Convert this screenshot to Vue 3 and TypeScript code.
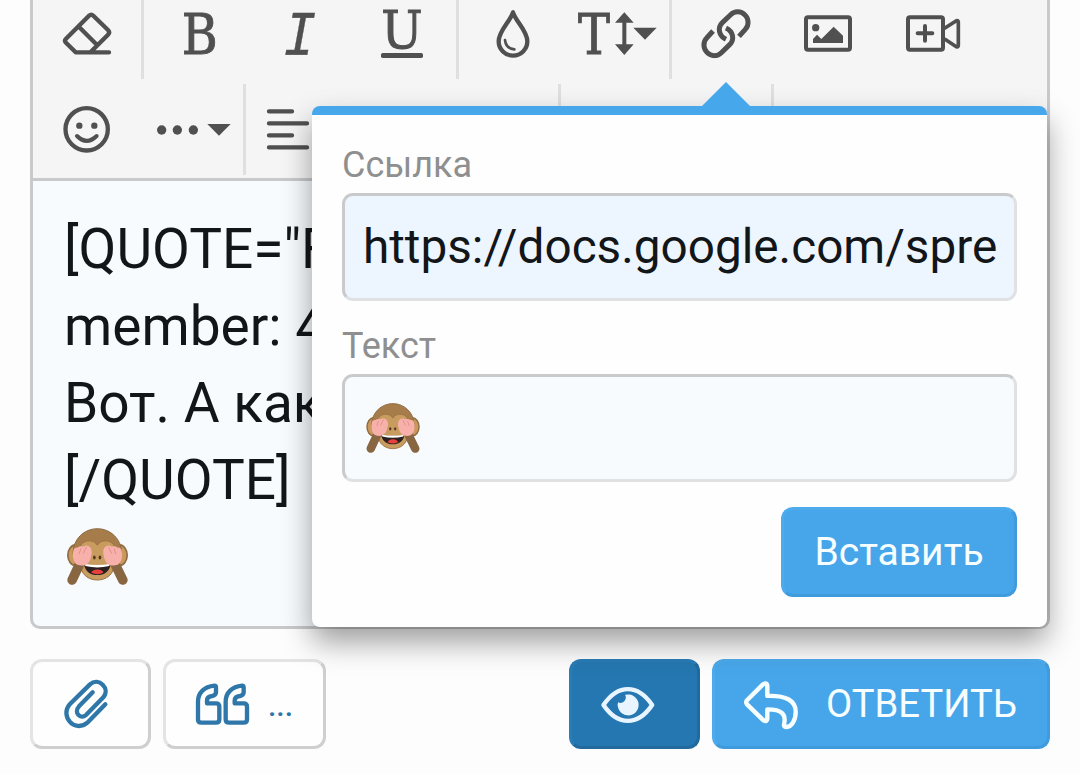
<script setup lang="ts">
import { ref } from 'vue'

const message = ref<string[]>([
  '[QUOTE="F',
  'member: 4',
  'Вот. А как',
  '[/QUOTE]'
])

const linkUrl = ref('https://docs.google.com/spre')
</script>

<template>
  <div class="page">
    <svg class="defs" width="0" height="0">
      <symbol id="monkey" viewBox="141 294 183 172">
        <ellipse cx="166" cy="376" rx="23" ry="31" fill="#c99a5b" stroke="#8f6a42" stroke-width="5" />
        <ellipse cx="299" cy="376" rx="23" ry="31" fill="#c99a5b" stroke="#8f6a42" stroke-width="5" />
        <ellipse cx="232" cy="368" rx="73" ry="72" fill="#a67c4b" stroke="#8b6740" stroke-width="3" />
        <path d="M232 346C222 326 184 328 179 354C176 378 186 388 181 404C182 434 205 451 232 451S282 434 283 404C278 388 288 378 285 354C280 328 242 326 232 346Z" fill="#c89b5e" stroke="#9a7244" stroke-width="3" />
        <ellipse cx="223" cy="383" rx="4" ry="6" fill="#54391f" />
        <ellipse cx="240" cy="383" rx="4" ry="6" fill="#54391f" />
        <path d="M192 404Q232 410 272 404C268 426 253 436 232 436S196 426 192 404Z" fill="#2c2020" />
        <path d="M194 403Q232 409 270 403L268 409Q232 418 196 409Z" fill="#fff" />
        <path d="M214 429Q218 419 232 419T250 429Q232 438 214 429Z" fill="#e8413d" />
        <path d="M177 406L156 451M287 406L309 451" stroke="#886642" stroke-width="29" stroke-linecap="round" />
        <path d="M160 361C162 352 170 354 174 352C180 346 188 352 194 348C202 344 208 350 212 354C219 366 213 378 211 388C205 406 188 411 172 405C158 398 156 376 160 361Z" fill="#f8b1aa" />
        <path d="M305 361C303 352 295 354 291 352C285 346 277 352 271 348C263 344 257 350 253 354C246 366 252 378 254 388C260 406 277 411 293 405C307 398 309 376 305 361Z" fill="#f8b1aa" />
        <path d="M177 372L182 357M190 370L199 352M288 372L283 357M275 370L266 352" stroke="#d98983" stroke-width="2.500" stroke-linecap="round" />
      </symbol>
    </svg>

    <div class="editor">
      <div class="toolbar">
        <div class="toolbar-row">
          <div class="group">
            <svg class="tool" viewBox="48 -36 306 273">
              <path class="line" d="M267 157H167L138 128Q132 122 138 116L207 47Q214 41 220 47L264 90Q271 97 264 104L212 156M178 82L229 133" stroke-width="13" />
            </svg>
          </div>
          <div class="group">
            <svg class="tool" viewBox="381 -36 306 273">
              <text x="485" y="163" font-size="170" textLength="108" lengthAdjust="spacingAndGlyphs">B</text>
            </svg>
            <svg class="tool" viewBox="687 -36 306 273">
              <text class="italic" x="792" y="164" font-size="173" textLength="97" lengthAdjust="spacingAndGlyphs">I</text>
            </svg>
            <svg class="tool" viewBox="33 -36 306 273">
              <text x="124" y="145" font-size="156" textLength="124" lengthAdjust="spacingAndGlyphs">U</text>
              <rect x="123" y="159" width="126" height="15" rx="5" />
            </svg>
          </div>
          <div class="group">
            <svg class="tool" viewBox="366 -36 306 273">
              <path class="line" d="M519 37C510 66 476 92 476 124a43 43 0 0 0 86 0C562 92 528 66 519 37Z" stroke-width="13" />
              <path class="line" d="M495 120Q498 146 523 148" stroke-width="8" />
            </svg>
            <svg class="tool" viewBox="672 -36 306 273">
              <text x="714" y="163" font-size="170" textLength="96" lengthAdjust="spacingAndGlyphs">T</text>
              <path d="M853 37L881 68H859V133H881L853 165L825 133H847V68H825Z" />
              <path d="M880 83H950L915 119Z" />
            </svg>
          </div>
          <div class="group">
            <svg class="tool" viewBox="15 -36 306 273">
              <path class="line butt" d="M207 109L226 88C238 76 236 55 225 45C212 31 193 33 182 44L157 68C141 84 147 108 168 118M129 93L110 114C98 126 100 147 111 157C124 171 143 169 154 158L179 134C195 118 189 94 168 84" stroke-width="15" />
            </svg>
            <svg class="tool" viewBox="321 -36 306 273">
              <rect class="line" x="408" y="52" width="132" height="97" rx="6" stroke-width="12" />
              <circle cx="437" cy="83" r="11" />
              <path d="M429 129V117L441 104L454 117L491 80L519 107V129Z" />
            </svg>
            <svg class="tool" viewBox="627 -36 306 273">
              <rect class="line" x="714" y="52" width="105" height="97" rx="6" stroke-width="12" />
              <path class="line" d="M825 84L859 62Q865 60 865 66V136Q865 142 859 140L825 118" stroke-width="11" />
              <path class="line" d="M743 100H787M765 78V122" stroke-width="12" />
            </svg>
          </div>
        </div>
        <div class="toolbar-row">
          <div class="group">
            <svg class="tool" viewBox="48 252 306 273">
              <circle class="line" cx="200" cy="388" r="63.500" stroke-width="13" />
              <circle cx="178" cy="377" r="9.500" />
              <circle cx="223" cy="377" r="9.500" />
              <path class="line" d="M171 408Q200 437 230 408" stroke-width="12" />
            </svg>
            <svg class="tool" viewBox="354 252 306 273">
              <circle cx="425" cy="390" r="14" />
              <circle cx="472" cy="390" r="14" />
              <circle cx="520" cy="390" r="14" />
              <path d="M562 372H632L597 407Z" />
            </svg>
          </div>
          <div class="group wide">
            <svg class="tool" viewBox="687 252 306 273">
              <path class="line" d="M747 334H816M747 370H861M747 406H816M747 442H861" stroke-width="13" />
            </svg>
          </div>
          <div class="group medium"></div>
        </div>
      </div>

      <div class="message">
        <div v-for="(line, i) in message" :key="i" class="message-line">{{ line }}</div>
        <div class="message-line">
          <svg class="monkey"><use href="#monkey" /></svg>
        </div>
      </div>

      <div class="popover">
        <div class="popover-arrow"></div>
        <label class="field-label">Ссылка</label>
        <div class="field filled">{{ linkUrl }}</div>
        <label class="field-label">Текст</label>
        <div class="field">
          <svg class="monkey small"><use href="#monkey" /></svg>
        </div>
        <button class="btn primary insert">Вставить</button>
      </div>
    </div>

    <div class="actions">
      <button class="btn plain attach">
        <svg width="121" height="90" viewBox="30 57 363 270">
          <path class="stroke-icon" d="M218 157L177 199C160 218 182 240 198 225L250 172C272 146 236 110 210 133L150 192C118 228 164 280 202 248L256 193" />
        </svg>
      </button>
      <button class="btn plain quote">
        <svg width="55" height="90" viewBox="525 57 165 270">
          <path class="stroke-icon" d="M583 137C553 140 534 158 534 185V238Q534 248 544 248H588Q598 248 598 238V200Q598 190 588 190H561V182C561 174 567 169 577 168Q588 166 588 157V143Q588 137 583 137Z" />
          <path class="stroke-icon" transform="translate(83 0)" d="M583 137C553 140 534 158 534 185V238Q534 248 544 248H588Q598 248 598 238V200Q598 190 588 190H561V182C561 174 567 169 577 168Q588 166 588 157V143Q588 137 583 137Z" />
        </svg>
        <span class="quote-dots">...</span>
      </button>
      <button class="btn preview">
        <svg width="131" height="90" viewBox="56 56 387.500 266">
          <path class="stroke-icon" d="M158 192Q190 145 230 145T302 192Q270 239 230 239T158 192Z" />
          <path fill="#e8f4ff" d="M222 162A31 31 0 1 1 201 184A16 16 0 0 0 222 162Z" />
        </svg>
      </button>
      <button class="btn primary reply">
        <svg width="56" height="90" viewBox="574 56 165.600 266">
          <path class="stroke-icon" d="M583 178L630 131Q643 123 643 136V165C700 163 727 180 727 212C727 238 714 256 700 257Q690 258 693 246C698 220 688 205 643 205V230Q643 245 630 236L583 190Q578 184 583 178Z" />
        </svg>
        <span>ОТВЕТИТЬ</span>
      </button>
    </div>
  </div>
</template>

<style>
body {
  background: #fdfdfd;
}
</style>

<style scoped>
.page {
  width: 1080px;
  height: 774px;
  overflow: hidden;
  background: #fdfdfd;
  font-family: Roboto, sans-serif;
}

.defs {
  position: absolute;
}

.editor {
  position: relative;
  box-sizing: border-box;
  display: flex;
  flex-direction: column;
  height: 629px;
  margin: 0 30px;
  border: 3px solid #c8c9ca;
  border-top: 0;
  border-radius: 0 0 10px 10px;
  background: #f7fbfe;
}

.toolbar {
  box-sizing: border-box;
  display: flex;
  flex-direction: column;
  justify-content: flex-end;
  gap: 5px;
  height: 181px;
  padding-bottom: 3px;
  background: #f5f5f5;
  border-bottom: 3px solid #c8c9ca;
}

.toolbar-row {
  display: flex;
  flex-shrink: 0;
  height: 91px;
}

.group {
  display: flex;
  padding: 0 3px;
  border-right: 3px solid #dfdfdf;
}

.group:last-child {
  border-right: 0;
}

.group.wide {
  width: 306px;
}

.toolbar-row .group.medium {
  width: 204px;
  border-right: 3px solid #dfdfdf;
}

.tool {
  width: 102px;
  height: 91px;
  fill: #505050;
}

.tool text {
  font-family: "DejaVu Serif", serif;
  stroke: #505050;
  stroke-width: 3;
}

.tool .italic {
  font-family: "DejaVu Sans Mono", monospace;
  font-style: italic;
  stroke-width: 1;
}

.line {
  fill: none;
  stroke: #505050;
  stroke-linecap: round;
  stroke-linejoin: round;
}

.line.butt {
  stroke-linecap: butt;
}

.message {
  padding: 30px 30px 0 31px;
  font-size: 55px;
  line-height: 77px;
  color: #131618;
}

.message-line {
  height: 77px;
  white-space: pre;
}

.monkey {
  display: block;
  width: 61px;
  height: 57px;
  margin: 9px 0 0 3px;
}

.monkey.small {
  width: 54px;
  height: 50px;
  margin: 0 0 0 2px;
}

.popover {
  position: absolute;
  top: 106px;
  left: 279px;
  box-sizing: border-box;
  display: flex;
  flex-direction: column;
  width: 735px;
  height: 521px;
  padding: 27px 30px 30px;
  background: #fefefe;
  border-top: 9px solid #47a7eb;
  border-radius: 8px;
  box-shadow: 0 15px 30px rgba(0, 0, 0, 0.38);
}

.popover-arrow {
  position: absolute;
  top: -33px;
  left: 390px;
  border: 24px solid transparent;
  border-top: 0;
  border-bottom-color: #47a7eb;
}

.field-label {
  height: 51px;
  font-size: 36px;
  line-height: 47px;
  color: #8f8f8f;
}

.field {
  box-sizing: border-box;
  display: flex;
  align-items: center;
  height: 108px;
  margin-bottom: 22px;
  padding: 0 18px;
  overflow: hidden;
  border: 3px solid;
  border-color: #c8cacc #dfe1e3 #dfe1e3 #c8cacc;
  border-radius: 11px;
  background: #f7fbfe;
  font-size: 47.700px;
  color: #131618;
  white-space: nowrap;
}

.field.filled {
  background: #edf5fe;
}

.field .monkey {
  margin-left: 3px;
}

.btn {
  box-sizing: border-box;
  display: flex;
  align-items: center;
  justify-content: center;
  height: 90px;
  padding: 0;
  border: 3px solid;
  border-radius: 12px;
  font-family: inherit;
  font-size: 39px;
}

.btn svg {
  flex-shrink: 0;
}

.primary {
  background: #47a6ea;
  border-color: #4dabec #3f9bdc #3f9bdc #4dabec;
  color: #f6feff;
}

.insert {
  align-self: flex-end;
  width: 236px;
  margin-top: 3px;
}

.actions {
  display: flex;
  gap: 12px;
  margin: 30px 30px 0;
}

.plain {
  background: #fefefe;
  border-color: #e4e4e4 #cfcfcf #cfcfcf #e4e4e4;
  color: #2f77a9;
}

.attach {
  width: 121px;
}

.quote {
  justify-content: flex-start;
  width: 163px;
  padding-left: 29px;
}

.quote-dots {
  margin: 3px 0 0 18px;
  font-size: 30px;
  font-weight: 500;
}

.preview {
  width: 131px;
  margin-left: auto;
  background: #2577b1;
  border-color: #2a7cb6 #226a9d #226a9d #2a7cb6;
  color: #e8f4ff;
}

.reply {
  justify-content: flex-start;
  width: 338px;
  padding-left: 29px;
}

.reply span {
  margin-left: 26px;
  font-size: 38.200px;
}

.stroke-icon {
  fill: none;
  stroke: currentColor;
  stroke-width: 13;
  stroke-linecap: round;
  stroke-linejoin: round;
}
</style>
